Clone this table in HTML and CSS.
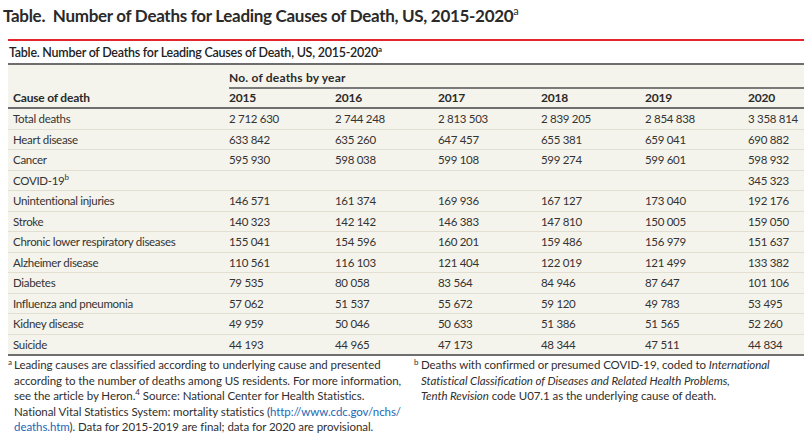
FILE: index.html
```html
<!DOCTYPE html>
<html lang="en">
<head>
<meta charset="utf-8">
<title>Number of Deaths for Leading Causes of Death</title>
<link rel="stylesheet" href="styles.css">
</head>
<body>
<h1 class="page-title">Table.&nbsp; Number of Deaths for Leading Causes of Death, US, 2015-2020<sup>a</sup></h1>
<div class="red-rule"></div>
<section class="table-block">
  <div class="caption">Table. Number of Deaths for Leading Causes of Death, US, 2015-2020<sup>a</sup></div>
  <table class="data">
    <colgroup>
      <col class="c-cause"><col class="c-2015"><col class="c-2016"><col class="c-2017"><col class="c-2018"><col class="c-2019"><col class="c-2020">
    </colgroup>
    <thead>
      <tr class="h1">
        <th></th>
        <th colspan="6" class="group"><span>No. of deaths by year</span></th>
      </tr>
      <tr class="h2">
        <th class="cause">Cause of death</th>
        <th>2015</th><th>2016</th><th>2017</th><th>2018</th><th>2019</th><th>2020</th>
      </tr>
    </thead>
    <tbody>
      <tr><td class="cause">Total deaths</td><td>2 712 630</td><td>2 744 248</td><td>2 813 503</td><td>2 839 205</td><td>2 854 838</td><td>3 358 814</td></tr>
      <tr><td class="cause">Heart disease</td><td>633 842</td><td>635 260</td><td>647 457</td><td>655 381</td><td>659 041</td><td>690 882</td></tr>
      <tr><td class="cause">Cancer</td><td>595 930</td><td>598 038</td><td>599 108</td><td>599 274</td><td>599 601</td><td>598 932</td></tr>
      <tr><td class="cause">COVID-19<sup>b</sup></td><td></td><td></td><td></td><td></td><td></td><td>345 323</td></tr>
      <tr><td class="cause">Unintentional injuries</td><td>146 571</td><td>161 374</td><td>169 936</td><td>167 127</td><td>173 040</td><td>192 176</td></tr>
      <tr><td class="cause">Stroke</td><td>140 323</td><td>142 142</td><td>146 383</td><td>147 810</td><td>150 005</td><td>159 050</td></tr>
      <tr><td class="cause">Chronic lower respiratory diseases</td><td>155 041</td><td>154 596</td><td>160 201</td><td>159 486</td><td>156 979</td><td>151 637</td></tr>
      <tr><td class="cause">Alzheimer disease</td><td>110 561</td><td>116 103</td><td>121 404</td><td>122 019</td><td>121 499</td><td>133 382</td></tr>
      <tr><td class="cause">Diabetes</td><td>79 535</td><td>80 058</td><td>83 564</td><td>84 946</td><td>87 647</td><td>101 106</td></tr>
      <tr><td class="cause">Influenza and pneumonia</td><td>57 062</td><td>51 537</td><td>55 672</td><td>59 120</td><td>49 783</td><td>53 495</td></tr>
      <tr><td class="cause">Kidney disease</td><td>49 959</td><td>50 046</td><td>50 633</td><td>51 386</td><td>51 565</td><td>52 260</td></tr>
      <tr><td class="cause">Suicide</td><td>44 193</td><td>44 965</td><td>47 173</td><td>48 344</td><td>47 511</td><td>44 834</td></tr>
    </tbody>
  </table>
  <div class="notes">
    <p class="note"><sup class="mark">a</sup>Leading causes are classified according to underlying cause and presented<br>according to the number of deaths among US residents. For more information,<br>see the article by Heron.<sup>4</sup> Source: National Center for Health Statistics.<br>National Vital Statistics System: mortality statistics (<a href="#">http://www.cdc.gov/nchs/<br>deaths.htm</a>). Data for 2015-2019 are final; data for 2020 are provisional.</p>
    <p class="note"><sup class="mark">b</sup>Deaths with confirmed or presumed COVID-19, coded to <i>International</i><br><i>Statistical Classification of Diseases and Related Health Problems,</i><br><i>Tenth Revision</i> code U07.1 as the underlying cause of death.</p>
  </div>
</section>
</body>
</html>
```

FILE: styles.css
```css
html, body {
  margin: 0;
  padding: 0;
  background: #ffffff;
}
body {
  width: 804px;
  overflow: hidden;
  font-family: Lato, "Open Sans", "Liberation Sans", sans-serif;
  color: #2b2b2b;
}
.page-title {
  margin: 0;
  padding: 6px 0 0 3px;
  height: 27px;
  font-size: 17px;
  font-weight: 700;
  color: #2a2a2a;
  letter-spacing: -0.3px;
  line-height: 20px;
}
.page-title sup {
  font-size: 11px;
  font-weight: 400;
  vertical-align: 7px;
  line-height: 0;
  letter-spacing: 0;
}
.red-rule {
  margin: 6px 0 0 8px;
  height: 2px;
  background: #e3262e;
}
.table-block {
  margin: 0 0 0 8px;
}
.caption {
  padding: 4px 0 0 1px;
  height: 18px;
  font-size: 12.5px;
  font-weight: 600;
  letter-spacing: -0.25px;
  line-height: 16px;
  color: #222;
}
.caption sup {
  font-size: 8px;
  vertical-align: 5px;
  line-height: 0;
}
.data {
  width: 800px;
  table-layout: fixed;
  border-collapse: collapse;
  background: #f5f4ec;
  font-size: 11.5px;
  letter-spacing: -0.3px;
  border-top: 2px solid #6e6e6e;
  border-bottom: 2px solid #6e6e6e;
}
.c-cause { width: 221px; }
.c-2015 { width: 106px; }
.c-2016 { width: 103px; }
.c-2017 { width: 103px; }
.c-2018 { width: 104px; }
.c-2019 { width: 103px; }
.c-2020 { width: 60px; }
.data th, .data td {
  padding: 0;
  text-align: left;
  white-space: nowrap;
  vertical-align: middle;
}
.data th {
  font-weight: 700;
  font-size: 12px;
  letter-spacing: -0.2px;
  color: #2a2a2a;
}
.data .cause {
  padding-left: 5px;
}
.h1 th {
  height: 23px;
}
.h1 .group span {
  display: block;
  border-bottom: 2px solid #7a7a7a;
  padding: 6px 0 2px;
  line-height: 14px;
  letter-spacing: 0.2px;
}
.h2 th {
  height: 18px;
  line-height: 18px;
  border-bottom: 2px solid #6e6e6e;
}
.data tbody td {
  height: 19.5px;
  line-height: 19.5px;
  color: #333;
  border-top: 1px solid #e2dfd2;
}
.data tbody tr:first-child td {
  border-top: none;
}
.data sup {
  font-size: 8px;
  vertical-align: 5px;
  line-height: 0;
}
.notes {
  display: grid;
  grid-template-columns: 406px 390px;
  padding-top: 1px;
}
.note {
  margin: 0;
  position: relative;
  padding-left: 6px;
  font-size: 11.5px;
  letter-spacing: -0.06px;
  line-height: 15.5px;
  white-space: nowrap;
  color: #2f2f2f;
}
.note + .note {
  padding-left: 7px;
}
.note .mark {
  position: absolute;
  left: 0;
  top: 1px;
  font-size: 8px;
  line-height: 8px;
}
.note sup {
  font-size: 8px;
  vertical-align: 5px;
  line-height: 0;
}
.note a {
  color: #2366b5;
  text-decoration: none;
}
```
